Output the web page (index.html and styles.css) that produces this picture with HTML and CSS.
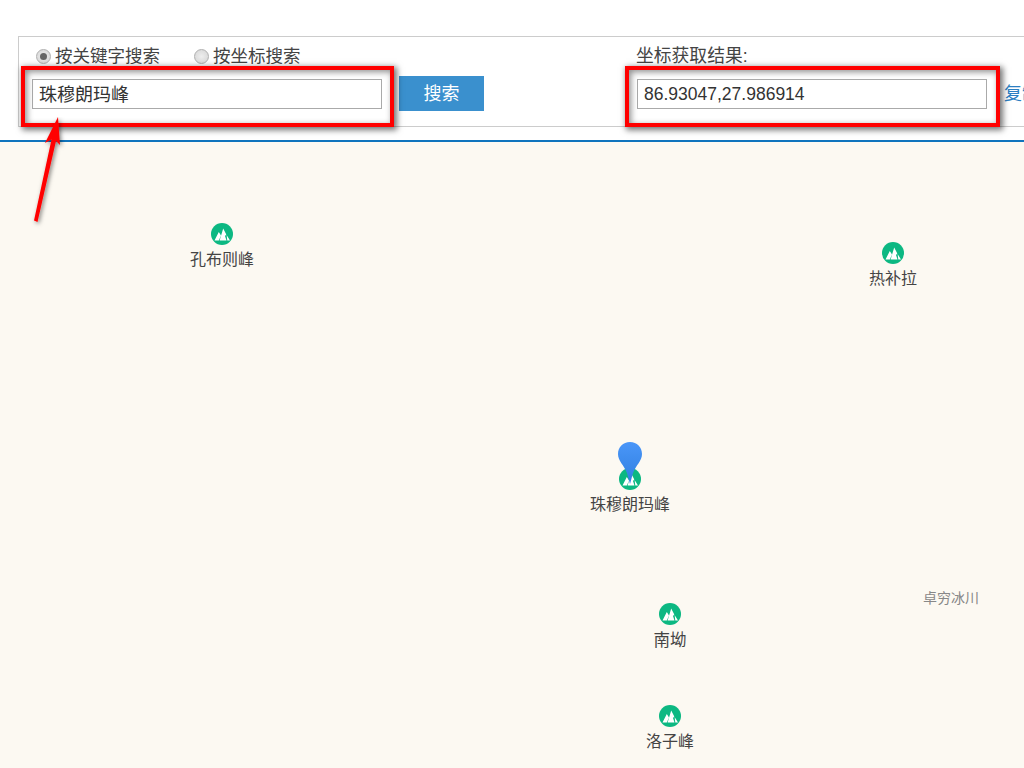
FILE: index.html
```html
<!DOCTYPE html>
<html lang="zh-CN">
<head>
<meta charset="utf-8">
<title>坐标拾取</title>
<link rel="stylesheet" href="styles.css">
</head>
<body>
<div class="page">
  <header class="top">
    <div class="panel">
      <section class="left">
        <div class="radios">
          <label class="radio"><span class="dot on"></span>按关键字搜索</label>
          <label class="radio second"><span class="dot"></span>按坐标搜索</label>
        </div>
        <div class="row">
          <div class="field word">珠穆朗玛峰</div>
          <div class="btn">搜索</div>
        </div>
      </section>
      <section class="right">
        <div class="caption">坐标获取结果:</div>
        <div class="row">
          <div class="field num">86.93047,27.986914</div>
          <a class="copy">复制</a>
        </div>
      </section>
    </div>
  </header>
  <main class="map">
    <div class="poi" style="left:172px;top:81px"><svg class="mtn" viewBox="0 0 22 22"><circle cx="11" cy="11" r="11" fill="#0cb882"/><path d="M3.5 17.5 7.8 9l2.2 3.5-2.2 5zM8.6 17.5l3.6-12 3.1 6-1.3 1.5 1.5 4.5zM15.6 12l3.4 5.5h-2.7z" fill="#fff"/></svg><span>孔布则峰</span></div>
    <div class="poi" style="left:843px;top:100px"><svg class="mtn" viewBox="0 0 22 22"><circle cx="11" cy="11" r="11" fill="#0cb882"/><path d="M3.5 17.5 7.8 9l2.2 3.5-2.2 5zM8.6 17.5l3.6-12 3.1 6-1.3 1.5 1.5 4.5zM15.6 12l3.4 5.5h-2.7z" fill="#fff"/></svg><span>热补拉</span></div>
    <div class="poi" style="left:580px;top:326px"><svg class="mtn" viewBox="0 0 22 22"><circle cx="11" cy="11" r="11" fill="#0cb882"/><path d="M3.5 17.5 7.8 9l2.2 3.5-2.2 5zM8.6 17.5l3.6-12 3.1 6-1.3 1.5 1.5 4.5zM15.6 12l3.4 5.5h-2.7z" fill="#fff"/></svg><span>珠穆朗玛峰</span></div>
    <div class="poi" style="left:620px;top:461px"><svg class="mtn" viewBox="0 0 22 22"><circle cx="11" cy="11" r="11" fill="#0cb882"/><path d="M3.5 17.5 7.8 9l2.2 3.5-2.2 5zM8.6 17.5l3.6-12 3.1 6-1.3 1.5 1.5 4.5zM15.6 12l3.4 5.5h-2.7z" fill="#fff"/></svg><span class="wide">南坳</span></div>
    <div class="poi" style="left:620px;top:563px"><svg class="mtn" viewBox="0 0 22 22"><circle cx="11" cy="11" r="11" fill="#0cb882"/><path d="M3.5 17.5 7.8 9l2.2 3.5-2.2 5zM8.6 17.5l3.6-12 3.1 6-1.3 1.5 1.5 4.5zM15.6 12l3.4 5.5h-2.7z" fill="#fff"/></svg><span>洛子峰</span></div>
    <div class="glacier">卓穷冰川</div>
    <svg class="pin" viewBox="0 0 24 42"><defs><linearGradient id="pinfill" x1="0" y1="0" x2="0" y2="1"><stop offset="0" stop-color="#4a96f8"/><stop offset="1" stop-color="#2f7fe0"/></linearGradient></defs><path d="M12 0C5 0 0 5 0 12c0 7 6 11 9 19l3 11 3-11c3-8 9-12 9-19C24 5 19 0 12 0z" fill="url(#pinfill)"/></svg>
  </main>
  <div class="mark one"></div>
  <div class="mark two"></div>
  <svg class="arrow" viewBox="0 0 60 120" width="60" height="120"><defs><filter id="sh" x="-40%" y="-20%" width="200%" height="140%"><feDropShadow dx="1.5" dy="1.5" stdDeviation="2" flood-color="#000" flood-opacity=".5"/></filter></defs><path d="M32 0 19 26l6.5-3.5L8 103.500l3.500 1.500L30 24l4 4z" fill="#f00" filter="url(#sh)"/></svg>
</div>
</body>
</html>
```

FILE: styles.css
```css
* { box-sizing: border-box; }
html, body { margin: 0; padding: 0; }
body {
  width: 1024px;
  height: 768px;
  overflow: hidden;
  background: #fff;
  color: #333;
  font-family: "Liberation Sans", Arial, "Noto Sans CJK SC", sans-serif;
}
.page { position: relative; width: 1024px; height: 768px; overflow: hidden; }
.top {
  height: 142px;
  padding: 36px 0 0 18px;
  border-bottom: 2px solid #0f74bd;
}
.panel {
  display: flex;
  width: 1040px;
  height: 91px;
  padding: 9px 0 0 13px;
  border: 1px solid #ccc;
  border-right: 0;
}
.left { width: 604px; flex: none; }
.right { flex: none; }
.radios { display: flex; height: 21px; align-items: center; padding-left: 4px; }
.radio { display: flex; align-items: center; font-size: 17.5px; line-height: 21px; color: #444; }
.second { margin-left: 34px; }
.dot {
  width: 15px;
  height: 15px;
  margin-right: 4px;
  border-radius: 50%;
  border: 1px solid #b0b0b0;
  background: radial-gradient(circle, #eee, #d4d4d4);
  position: relative;
}
.dot.on::after {
  content: "";
  position: absolute;
  left: 3px;
  top: 3px;
  width: 7px;
  height: 7px;
  border-radius: 50%;
  background: #666;
}
.row { display: flex; align-items: center; height: 35px; margin-top: 9px; }
.field {
  width: 350px;
  height: 30px;
  padding: 0 6px;
  border: 1px solid #aaa;
  background: #fff;
  font-size: 17.5px;
  line-height: 28px;
  color: #333;
}
.word { font-size: 18px; line-height: 30px; }
.num { margin-left: 1px; }
.btn {
  width: 85px;
  height: 35px;
  margin-left: 17px;
  background: #3a90ce;
  color: #fff;
  font-size: 18px;
  line-height: 37px;
  text-align: center;
}
.caption { font-size: 17.8px; line-height: 21px; color: #444; }
.copy {
  margin-left: 17px;
  padding-bottom: 4px;
  font-size: 18px;
  color: #2c7fc2;
  white-space: nowrap;
}
.map { position: relative; height: 626px; background: #fcf9f2; }
.poi {
  position: absolute;
  width: 100px;
  display: flex;
  flex-direction: column;
  align-items: center;
  font-size: 16px;
  line-height: 20px;
  color: #444;
}
.poi span { margin-top: 5px; white-space: nowrap; }
.poi .wide { font-size: 16.5px; }
.mtn { width: 22px; height: 22px; display: block; }
.glacier { position: absolute; left: 923px; top: 447px; font-size: 14px; line-height: 18px; color: #888; }
.pin { position: absolute; left: 618px; top: 300px; width: 24px; height: 42px; }
.mark {
  position: absolute;
  top: 66px;
  height: 61px;
  border: 4px solid #f00;
  box-shadow: 2px 2px 6px 1px rgba(0, 0, 0, .55), inset 2px 2px 6px rgba(0, 0, 0, .45);
}
.mark.one { left: 21px; width: 373px; }
.mark.two { left: 625px; width: 375px; }
.arrow { position: absolute; left: 26px; top: 117px; }
```
